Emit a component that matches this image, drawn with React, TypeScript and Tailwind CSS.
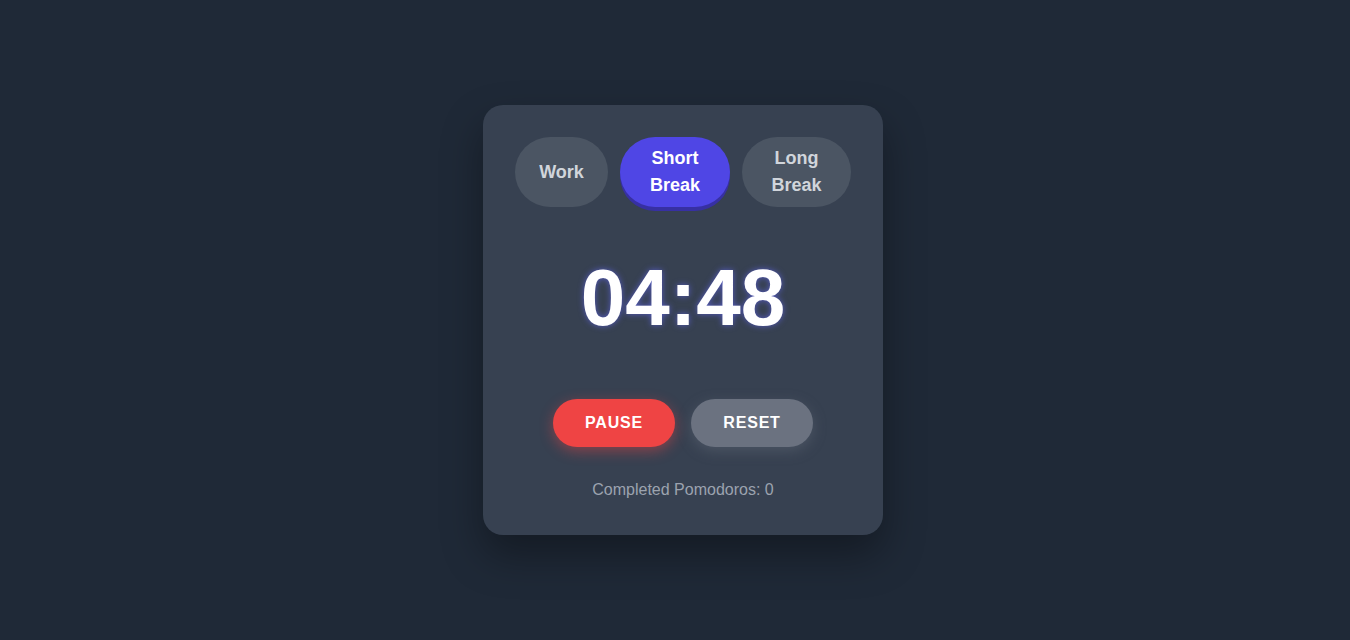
import { useState } from 'react';

type Mode = 'work' | 'short' | 'long';

const MODES: { id: Mode; label: string; width: string; seconds: number }[] = [
  { id: 'work', label: 'Work', width: 'w-[93px]', seconds: 25 * 60 },
  { id: 'short', label: 'Short Break', width: 'w-[110px]', seconds: 5 * 60 },
  { id: 'long', label: 'Long Break', width: 'w-[109px]', seconds: 15 * 60 },
];

const formatTime = (secs: number) => {
  const m = Math.floor(secs / 60).toString().padStart(2, '0');
  const s = (secs % 60).toString().padStart(2, '0');
  return `${m}:${s}`;
};

export default function App() {
  const [mode, setMode] = useState<Mode>('short');
  const [timeLeft, setTimeLeft] = useState(288);
  const [running, setRunning] = useState(true);
  const [completed] = useState(0);

  const handleMode = (id: Mode) => {
    const m = MODES.find((x) => x.id === id)!;
    setMode(id);
    setTimeLeft(m.seconds);
    setRunning(false);
  };

  const handleReset = () => {
    const m = MODES.find((x) => x.id === mode)!;
    setTimeLeft(m.seconds);
    setRunning(false);
  };

  return (
    <div className="min-h-screen bg-[#1f2937] flex justify-center pl-4 pt-[105px] font-['Liberation_Sans',Arial,sans-serif]">
      <div className="w-[400px] h-[430px] bg-[#374151] rounded-[20px] p-8 shadow-[0_20px_40px_rgba(0,0,0,0.35)] flex flex-col items-center">
        <div className="flex gap-3 h-[70px]">
          {MODES.map((m) => (
            <button
              key={m.id}
              onClick={() => handleMode(m.id)}
              className={`${m.width} rounded-full text-[18px] leading-[27px] font-bold px-4 ${
                mode === m.id
                  ? 'bg-[#4f46e5] text-white shadow-[0_4px_0_#3730a3]'
                  : 'bg-[#4b5563] text-[#d1d5db]'
              }`}
            >
              {m.label}
            </button>
          ))}
        </div>

        <div className="mt-[51px] mb-[61px] h-[80px] text-[80px] leading-none font-bold text-white [text-shadow:0_0_6px_rgba(99,102,241,0.7)]">
          {formatTime(timeLeft)}
        </div>

        <div className="flex gap-4">
          <button
            onClick={() => setRunning((r) => !r)}
            className="w-[122px] py-3 rounded-full bg-[#ef4444] text-white text-[16px] leading-6 font-bold tracking-[0.05em] shadow-[0_4px_14px_rgba(239,68,68,0.45)]"
          >
            {running ? 'PAUSE' : 'START'}
          </button>
          <button
            onClick={handleReset}
            className="w-[122px] py-3 rounded-full bg-[#6b7280] text-white text-[16px] leading-6 font-bold tracking-[0.05em] shadow-[0_4px_14px_rgba(107,114,128,0.4)]"
          >
            RESET
          </button>
        </div>

        <p className="mt-[31px] text-[16px] leading-6 text-[#9ca3af]">
          Completed Pomodoros: {completed}
        </p>
      </div>
    </div>
  );
}
